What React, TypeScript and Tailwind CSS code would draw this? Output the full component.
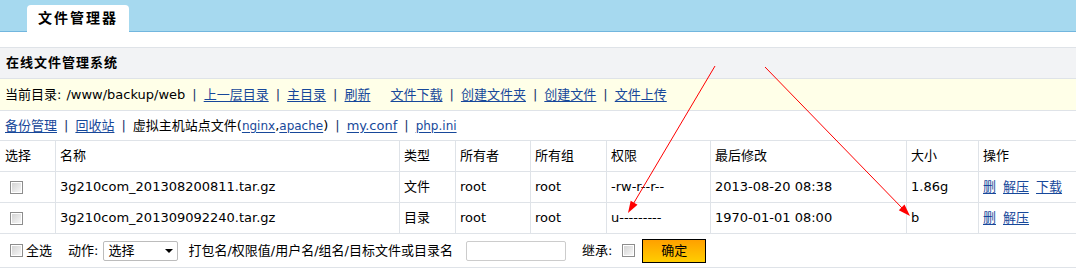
import React from "react";

const link = "text-[#17489a] underline underline-offset-[2px]";

function Sep() {
  return <span className="mx-[7px] text-[#1c3569]">|</span>;
}

function Box() {
  return (
    <span className="inline-flex w-[13px] h-[13px] shrink-0 border border-[#8d8d8d] bg-white p-px">
      <span className="w-full h-full bg-linear-to-br from-[#d4d4d4] to-[#f7f7f7]" />
    </span>
  );
}

const cols = "grid grid-cols-[56px_344px_56px_75px_76px_104px_196px_72px_97px]";
const cell = "border-r border-[#dfe3e8] pl-[4px] flex items-center h-full";

const rows = [
  {
    name: "3g210com_201308200811.tar.gz",
    type: "文件",
    perm: "-rw-r--r--",
    date: "2013-08-20 08:38",
    size: "1.86g",
    ops: ["删", "解压", "下载"],
  },
  {
    name: "3g210com_201309092240.tar.gz",
    type: "目录",
    perm: "u---------",
    date: "1970-01-01 08:00",
    size: "b",
    ops: ["删", "解压"],
  },
];

export default function App() {
  return (
    <div className="relative w-[1076px] h-[271px] bg-white text-black text-[13px] font-['DejaVu_Sans','Noto_Sans_CJK_SC',sans-serif] overflow-hidden">
      {/* top band with tab */}
      <div className="h-[32px] bg-[#a6d9ef] border-b border-[#72b6de] flex items-end pl-[27px]">
        <div className="h-[27px] w-[102px] -mb-px bg-white rounded-t-[4px] flex items-center pl-[11px] text-[14px] font-bold tracking-[2px]">
          文件管理器
        </div>
      </div>

      <div className="mt-[15px] h-[32px] bg-[#f2f3f5] border-y border-[#dfe3e8] flex items-center pl-[6px] font-bold tracking-[1px]">
        在线文件管理系统
      </div>

      <div className="h-[32px] bg-[#ffffe8] border-b border-[#dfe3e8] flex items-center pl-[5px] whitespace-nowrap">
        <span>当前目录:</span>
        <span className="ml-[5px]">/www/backup/web</span>
        <Sep />
        <a className={link}>上一层目录</a>
        <Sep />
        <a className={link}>主目录</a>
        <Sep />
        <a className={link}>刷新</a>
        <a className={`${link} ml-[20px]`}>文件下载</a>
        <Sep />
        <a className={link}>创建文件夹</a>
        <Sep />
        <a className={link}>创建文件</a>
        <Sep />
        <a className={link}>文件上传</a>
      </div>

      <div className="h-[30px] flex items-center pl-[5px] whitespace-nowrap border-b border-[#dfe3e8]">
        <a className={link}>备份管理</a>
        <Sep />
        <a className={link}>回收站</a>
        <Sep />
        <span>虚拟主机站点文件(</span>
        <a className={`${link} text-[12px]`}>nginx</a>
        <span>,</span>
        <a className={`${link} text-[12px]`}>apache</a>
        <span>)</span>
        <Sep />
        <a className={link}>my.conf</a>
        <Sep />
        <a className={`${link} text-[12px]`}>php.ini</a>
      </div>

      {/* table */}
      <div className={`${cols} h-[31px] border-b border-[#dfe3e8]`}>
        <div className={`${cell} pl-[5px]`}>选择</div>
        <div className={cell}>名称</div>
        <div className={cell}>类型</div>
        <div className={cell}>所有者</div>
        <div className={cell}>所有组</div>
        <div className={cell}>权限</div>
        <div className={cell}>最后修改</div>
        <div className={cell}>大小</div>
        <div className={`${cell} border-r-0`}>操作</div>
      </div>
      {rows.map((r) => (
        <div key={r.name} className={`${cols} h-[31px] border-b border-[#dfe3e8]`}>
          <div className={`${cell} pl-[10px]`}>
            <Box />
          </div>
          <div className={cell}>{r.name}</div>
          <div className={cell}>{r.type}</div>
          <div className={cell}>root</div>
          <div className={cell}>root</div>
          <div className={cell}>{r.perm}</div>
          <div className={cell}>{r.date}</div>
          <div className={cell}>{r.size}</div>
          <div className={`${cell} border-r-0 gap-[7px]`}>
            {r.ops.map((o) => (
              <a key={o} className={link}>
                {o}
              </a>
            ))}
          </div>
        </div>
      ))}

      <div className="h-[34px] border-b border-[#dfe3e8] flex items-center pl-[10px] whitespace-nowrap">
        <Box />
        <span className="ml-[3px]">全选</span>
        <span className="ml-[16px]">动作:</span>
        <div className="ml-[5px] w-[75px] h-[20px] border border-[#bcbcbc] rounded-[2px] bg-white flex items-center justify-between pl-[4px] pr-[4px]">
          <span>选择</span>
          <span className="w-0 h-0 border-x-[4px] border-x-transparent border-t-[4px] border-t-black" />
        </div>
        <span className="ml-[10px]">打包名/权限值/用户名/组名/目标文件或目录名</span>
        <div className="ml-[13px] w-[100px] h-[20px] border border-[#cccccc] rounded-[2px] bg-white" />
        <span className="ml-[16px]">继承:</span>
        <span className="ml-[10px] inline-flex">
          <Box />
        </span>
        <button className="ml-[7px] w-[64px] h-[24px] border border-black bg-linear-to-b from-[#ffa000] to-[#ffcd00] text-[13px] flex items-center justify-center">
          确定
        </button>
      </div>

      {/* annotation arrows */}
      <svg className="absolute left-0 top-0 pointer-events-none" width="1076" height="271" viewBox="0 0 1076 271">
        <line x1="715" y1="66" x2="632" y2="206" stroke="#ff0000" strokeWidth="1" />
        <polygon points="628,213 637.5,204.7 630.7,200.7" fill="#ff0000" />
        <line x1="765" y1="67" x2="904" y2="210" stroke="#ff0000" strokeWidth="1" />
        <polygon points="910,216 898.8,210.2 904.5,204.6" fill="#ff0000" />
      </svg>
    </div>
  );
}
